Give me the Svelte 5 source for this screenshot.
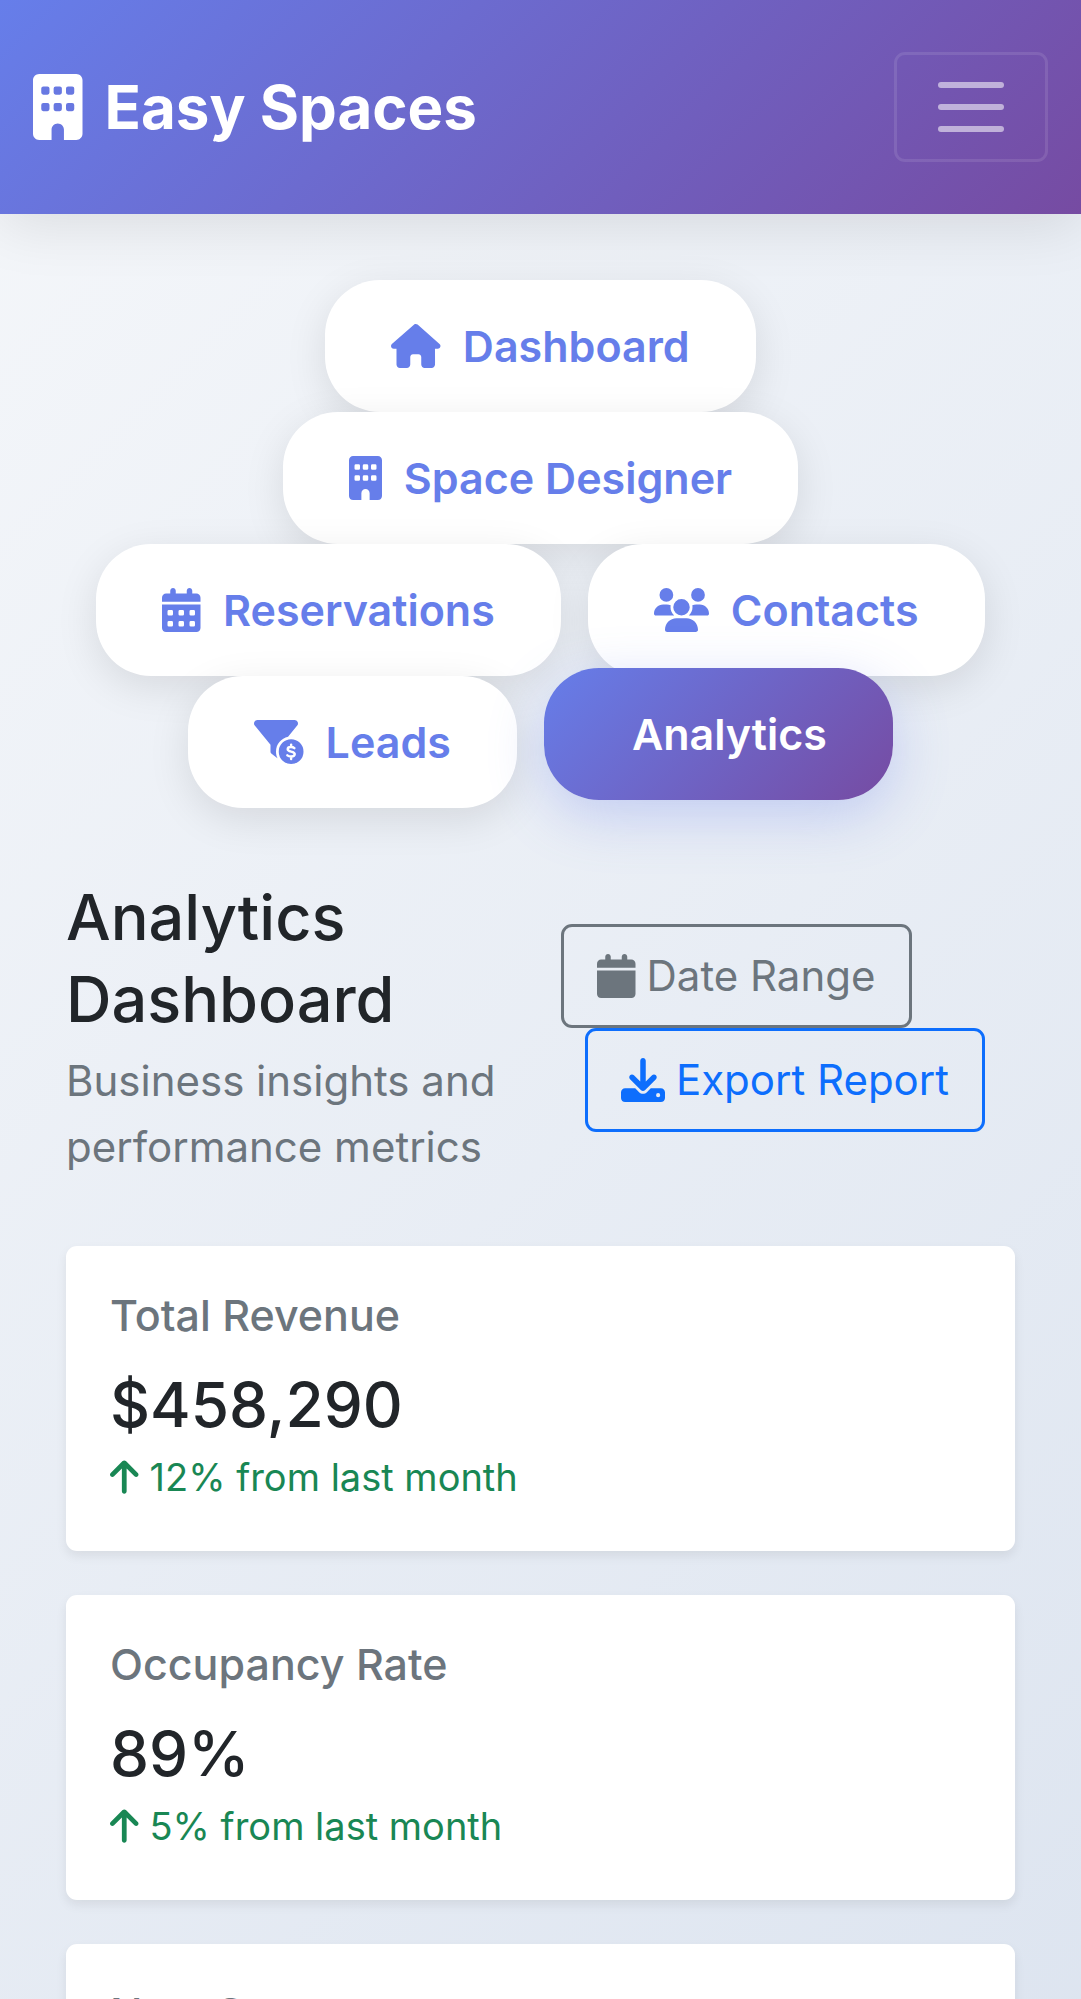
<script>
  const cell = (x, y) =>
    `M${x + 16} ${y}h32a16 16 0 0 1 16 16v32a16 16 0 0 1-16 16h-32a16 16 0 0 1-16-16v-32a16 16 0 0 1 16-16z`;
  const grid = (xs, ys) => xs.flatMap((x) => ys.map((y) => cell(x, y))).join('');

  const calendar =
    'M128 0c17.7 0 32 14.3 32 32V64H288V32c0-17.7 14.3-32 32-32s32 14.3 32 32V64h48c26.5 0 48 21.5 48 48v48H0V112C0 85.5 21.5 64 48 64H96V32c0-17.7 14.3-32 32-32zM0 192H448V464c0 26.5-21.5 48-48 48H48c-26.5 0-48-21.5-48-48V192z';

  const icons = {
    house: {
      w: 576,
      d: 'M575.8 255.5c0 18-15 32.1-32 32.1h-32l.7 160.2c0 2.7-.2 5.4-.5 8.1V472c0 22.1-17.9 40-40 40H392c-22.1 0-40-17.9-40-40V384c0-17.7-14.3-32-32-32H256c-17.7 0-32 14.3-32 32v88c0 22.1-17.9 40-40 40H104c-22.1 0-40-17.9-40-40V287.6H32c-18 0-32-14-32-32.1c0-9 3-17 10-24L266.4 8c7-7 15-8 22-8s15 2 21 7L564.8 231.5c8 7 12 15 11 24z'
    },
    building: {
      w: 384,
      d:
        'M48 0C21.5 0 0 21.5 0 48V464c0 26.5 21.5 48 48 48h96V432c0-26.5 21.5-48 48-48s48 21.5 48 48v80h96c26.5 0 48-21.5 48-48V48c0-26.5-21.5-48-48-48H48z' +
        grid([64, 160, 256], [96, 224])
    },
    calendarDays: {
      w: 448,
      d: calendar + grid([64, 192, 320], [256, 384])
    },
    calendar: { w: 448, d: calendar },
    users: {
      w: 640,
      d: 'M144 0a80 80 0 1 1 0 160A80 80 0 1 1 144 0zM512 0a80 80 0 1 1 0 160A80 80 0 1 1 512 0zM0 298.7C0 239.8 47.8 192 106.7 192h42.7c15.9 0 31 3.5 44.6 9.7c-1.3 7.2-1.9 14.7-1.9 22.3c0 38.2 16.8 72.5 43.3 96H21.3C9.6 320 0 310.4 0 298.7zM405.3 320c26-23.5 42.6-57.8 42.6-96c0-7.6-.7-15-1.9-22.3c13.6-6.3 28.7-9.7 44.6-9.7h42.7C592.2 192 640 239.8 640 298.7c0 11.8-9.6 21.3-21.3 21.3H405.3zM224 224a96 96 0 1 1 192 0 96 96 0 1 1-192 0zM128 485.3C128 411.7 187.7 352 261.3 352H378.7C452.3 352 512 411.7 512 485.3c0 14.7-11.9 26.7-26.7 26.7H154.7c-14.7 0-26.7-11.9-26.7-26.7z'
    },
    funnelDollar: {
      w: 576,
      d: 'M3.9 22.9C10.5 8.9 24.5 0 40 0H472c15.5 0 29.5 8.9 36.1 22.9s4.6 30.5-5.2 42.5L396.4 195.6C316.2 212.1 256 283 256 368c0 27.4 6.3 53.4 17.5 76.5c-1.6-.8-3.2-1.8-4.7-2.9l-64-48c-8.1-6-12.8-15.5-12.8-25.6V288.9L9 65.3C-.7 53.4-2.8 36.8 3.9 22.9zM432 224a144 144 0 1 1 0 288 144 144 0 1 1 0-288z',
      mark: 'M470 328c-10-9-24-13-40-13-24 0-38 10-38 26 0 36 82 18 82 56 0 17-16 28-42 28-18 0-34-6-44-14M432 286v28M432 426v28'
    },
    download: {
      w: 512,
      d: 'M288 32c0-17.7-14.3-32-32-32s-32 14.3-32 32V274.7l-73.4-73.4c-12.5-12.5-32.8-12.5-45.3 0s-12.5 32.8 0 45.3l128 128c12.5 12.5 32.8 12.5 45.3 0l128-128c12.5-12.5 12.5-32.8 0-45.3s-32.8-12.5-45.3 0L288 274.7V32zM48 352c-26.5 0-48 21.5-48 48v64c0 26.5 21.5 48 48 48H464c26.5 0 48-21.5 48-48V400c0-26.5-21.5-48-48-48H346.5l-45.3 45.3c-25 25-65.5 25-90.5 0L165.5 352H48zm384 56a24 24 0 1 1 0 48 24 24 0 1 1 0-48z'
    },
    arrowUp: {
      w: 384,
      d: 'M214.6 41.4c-12.5-12.5-32.8-12.5-45.3 0l-160 160c-12.5 12.5-12.5 32.8 0 45.3s32.8 12.5 45.3 0L160 141.2V448c0 17.7 14.3 32 32 32s32-14.3 32-32V141.2L329.4 246.6c12.5 12.5 32.8 12.5 45.3 0s12.5-32.8 0-45.3l-160-160z'
    }
  };

  const links = [
    { label: 'Dashboard', icon: 'house' },
    { label: 'Space Designer', icon: 'building' },
    { label: 'Reservations', icon: 'calendarDays' },
    { label: 'Contacts', icon: 'users' },
    { label: 'Leads', icon: 'funnelDollar' },
    { label: 'Analytics', active: true }
  ];

  const stats = [
    { title: 'Total Revenue', value: '$458,290', change: '12% from last month' },
    { title: 'Occupancy Rate', value: '89%', change: '5% from last month' },
    { title: 'New Customers', value: '124', change: '8% from last month' }
  ];
</script>

{#snippet icon(name)}
  <svg class="icon" viewBox="0 0 {icons[name].w} 512" aria-hidden="true">
    <path d={icons[name].d} fill-rule="evenodd" />
    {#if icons[name].mark}<path class="mark" d={icons[name].mark} />{/if}
  </svg>
{/snippet}

<header class="topbar">
  <a class="brand" href="#home">{@render icon('building')}Easy Spaces</a>
  <button class="toggler" type="button" aria-label="Toggle navigation">
    <span></span><span></span><span></span>
  </button>
</header>

<nav class="pills" aria-label="Sections">
  {#each links as link}
    <a class="pill" class:active={link.active} href="#{link.label}">
      {#if link.icon}{@render icon(link.icon)}{/if}
      <span class="label">{link.label}</span>
    </a>
  {/each}
</nav>

<main>
  <section class="heading">
    <div class="intro">
      <h1>Analytics Dashboard</h1>
      <p>Business insights and performance metrics</p>
    </div>
    <div class="actions">
      <button class="btn secondary" type="button">{@render icon('calendar')}Date Range</button>
      <button class="btn primary" type="button">{@render icon('download')}Export Report</button>
    </div>
  </section>

  <section class="stats">
    {#each stats as stat}
      <article class="card">
        <h2>{stat.title}</h2>
        <p class="value">{stat.value}</p>
        <p class="change">{@render icon('arrowUp')}{stat.change}</p>
      </article>
    {/each}
  </section>
</main>

<style>
  :global(body) {
    min-height: 100vh;
    font-family: Inter, 'Liberation Sans', sans-serif;
    font-size: 42px;
    line-height: 66px;
    color: #212529;
    background: linear-gradient(135deg, #f5f7fa 0%, #dbe3ef 100%);
  }
  h1,
  h2,
  p {
    margin: 0;
    font-weight: 500;
  }
  a {
    text-decoration: none;
  }
  button {
    font: inherit;
    background: none;
  }
  .icon {
    height: 44px;
    width: auto;
    flex: none;
    fill: currentColor;
  }
  .mark {
    fill: none;
    stroke: #fff;
    stroke-width: 28;
    stroke-linecap: round;
  }

  .topbar {
    display: flex;
    align-items: center;
    justify-content: space-between;
    padding: 52px 33px;
    background: linear-gradient(135deg, #667eea 0%, #764ba2 100%);
    box-shadow: 0 11px 55px rgba(0, 0, 0, 0.1);
  }
  .brand {
    display: flex;
    align-items: center;
    gap: 22px;
    font-size: 60px;
    font-weight: 700;
    color: #fff;
  }
  .brand .icon {
    height: 66px;
  }
  .toggler {
    display: flex;
    flex-direction: column;
    gap: 16px;
    padding: 27px 41px;
    border: 3px solid rgba(255, 255, 255, 0.1);
    border-radius: 11px;
  }
  .toggler span {
    width: 66px;
    height: 6px;
    border-radius: 3px;
    background: rgba(255, 255, 255, 0.55);
  }

  .pills {
    display: flex;
    flex-wrap: wrap;
    justify-content: center;
    column-gap: 27px;
    padding: 66px 88px 68px;
    font-size: 43px;
  }
  .pill {
    display: flex;
    align-items: center;
    padding: 33px 66px;
    border-radius: 55px;
    font-weight: 600;
    color: #667eea;
    background: #fff;
    box-shadow: 0 11px 41px rgba(0, 0, 0, 0.1);
  }
  .label {
    margin-left: 22px;
  }
  .pill.active {
    color: #fff;
    background: linear-gradient(135deg, #667eea 0%, #764ba2 100%);
    box-shadow: 0 16px 55px rgba(102, 126, 234, 0.3);
    transform: translateY(-8px);
  }

  main {
    padding: 0 66px 66px;
  }
  .heading {
    display: flex;
    align-items: center;
    justify-content: space-between;
    margin-bottom: 66px;
  }
  .intro {
    flex: 1;
  }
  h1 {
    margin-bottom: 8px;
    font-size: 63px;
    line-height: 82px;
  }
  .intro p {
    font-weight: 400;
    color: #6c757d;
  }
  .actions {
    display: flex;
    flex-direction: column;
    width: 424px;
    margin-right: 30px;
  }
  .btn {
    display: flex;
    align-items: center;
    gap: 11px;
    padding: 16px 33px;
    border: 3px solid currentColor;
    border-radius: 11px;
    white-space: nowrap;
  }
  .secondary {
    align-self: flex-start;
    color: #6c757d;
  }
  .primary {
    align-self: flex-end;
    color: #0d6efd;
  }

  .stats {
    display: grid;
    gap: 44px;
  }
  .card {
    padding: 44px;
    border-radius: 11px;
    background: #fff;
    box-shadow: 0 5px 11px rgba(0, 0, 0, 0.075);
  }
  h2 {
    margin-bottom: 25px;
    font-size: 43px;
    line-height: 50px;
    color: #6c757d;
  }
  .value {
    margin-bottom: 3px;
    font-size: 62px;
    line-height: 79px;
  }
  .change {
    display: flex;
    align-items: center;
    gap: 11px;
    font-size: 38px;
    line-height: 60px;
    font-weight: 400;
    color: #198754;
  }
  .change .icon {
    height: 38px;
  }
</style>
